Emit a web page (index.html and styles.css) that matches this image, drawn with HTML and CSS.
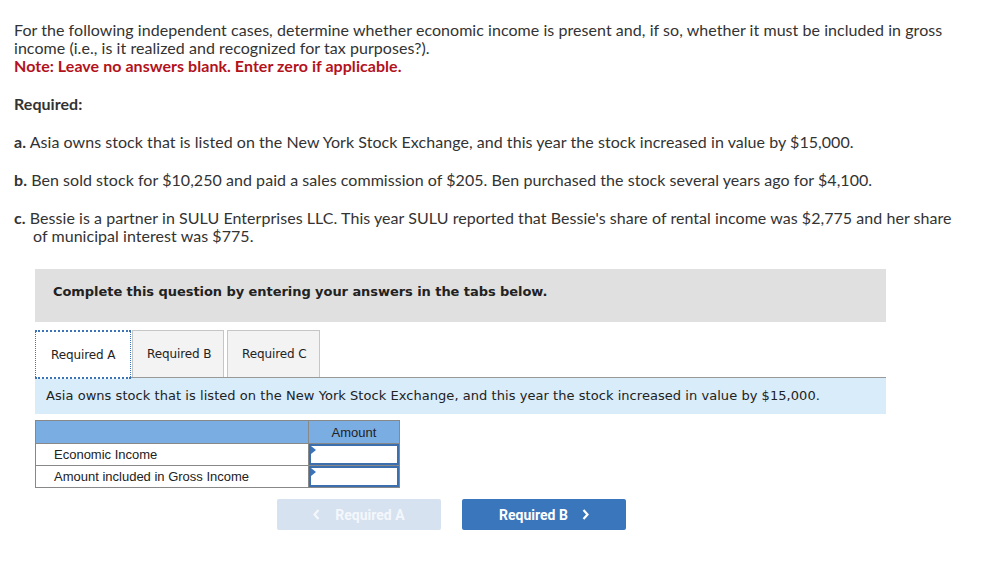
FILE: index.html
```html
<!DOCTYPE html>
<html>
<head>
<meta charset="utf-8">
<link rel="stylesheet" href="styles.css">
</head>
<body>
<div class="page">
  <p class="intro">For the following independent cases, determine whether economic income is present and, if so, whether it must be included in gross income (i.e., is it realized and recognized for tax purposes?).<br><span class="note">Note: Leave no answers blank. Enter zero if applicable.</span></p>
  <p class="req">Required:</p>
  <p class="item"><b>a.</b> Asia owns stock that is listed on the New York Stock Exchange, and this year the stock increased in value by $15,000.</p>
  <p class="item"><b>b.</b> Ben sold stock for $10,250 and paid a sales commission of $205. Ben purchased the stock several years ago for $4,100.</p>
  <p class="item hang"><b>c.</b> Bessie is a partner in SULU Enterprises LLC. This year SULU reported that Bessie's share of rental income was $2,775 and her share of municipal interest was $775.</p>

  <div class="panel">
    <div class="banner">Complete this question by entering your answers in the tabs below.</div>
    <div class="tabs">
      <div class="tab active">Required A</div>
      <div class="tab">Required B</div>
      <div class="tab">Required C</div>
    </div>
    <div class="info">Asia owns stock that is listed on the New York Stock Exchange, and this year the stock increased in value by $15,000.</div>
    <table class="grid">
      <tr class="head"><th class="lbl"></th><th class="amt">Amount</th></tr>
      <tr><td class="lbl">Economic Income</td><td class="inp"><div class="box"><span class="tri"></span></div></td></tr>
      <tr><td class="lbl">Amount included in Gross Income</td><td class="inp"><div class="box"><span class="tri"></span></div></td></tr>
    </table>
    <div class="nav">
      <div class="btn prev"><svg class="chev" width="7" height="11" viewBox="0 0 7 11"><path d="M5.5 1 L1.5 5.5 L5.5 10" fill="none" stroke="currentColor" stroke-width="2.2"/></svg>Required A</div>
      <div class="btn next">Required B<svg class="chev r" width="7" height="11" viewBox="0 0 7 11"><path d="M1.5 1 L5.5 5.5 L1.5 10" fill="none" stroke="currentColor" stroke-width="2.2"/></svg></div>
    </div>
  </div>
</div>
</body>
</html>
```
FILE: styles.css
```css
html, body { margin: 0; padding: 0; background: #fff; }
.page { padding: 21px 14px 0 14px; font-family: "Lato", "Liberation Sans", sans-serif; font-size: 16px; letter-spacing: 0.05px; color: #333; }
p { margin: 0; }
.intro { line-height: 18px; width: 940px; }
.note { color: #b3121c; font-weight: bold; }
.req { font-weight: bold; margin-top: 20px; line-height: 18px; }
.item { margin-top: 20px; line-height: 18px; }
.item b { font-weight: bold; }
.hang { padding-left: 19px; text-indent: -19px; }
.panel { margin: 24px 0 0 21px; width: 851px; letter-spacing: 0; }
.banner { background: #e0e0e0; height: 53px; box-sizing: border-box; padding: 15px 18px; font-family: "DejaVu Sans", Verdana, sans-serif; font-weight: bold; font-size: 13px; color: #222; letter-spacing: -0.06px; }
.tabs { display: flex; margin-top: 8px; border-bottom: 1px solid #999; height: 47px; }
.tab { box-sizing: border-box; height: 47px; padding: 0 0 0 14px; white-space: nowrap; display: flex; align-items: center; font-family: "DejaVu Sans", Verdana, sans-serif; font-size: 12px; color: #222; background: #f3f3f3; border: 1px solid #c6c6c6; border-bottom: none; margin-right: 3px; letter-spacing: -0.1px; }
.tab.active { background: #fff; border: 1px dotted #3b73b9; border-width: 2px 1px; height: 49px; margin-bottom: -2px; width: 96px; margin-right: 1px; padding: 0 0 0 15px; }
.tab:nth-child(2) { width: 92px; }
.tab:nth-child(3) { width: 93px; }
.info { background: #d9ecfa; height: 36px; box-sizing: border-box; padding: 10px 11px; font-family: "DejaVu Sans", Verdana, sans-serif; font-size: 13px; color: #222; letter-spacing: 0.05px; white-space: nowrap; }
.grid { border-collapse: collapse; margin-top: 6px; font-family: "Liberation Sans", Arial, sans-serif; font-size: 13px; color: #222; }
.grid th, .grid td { border: 1px solid #888; padding: 0; }
.head th { background: #7aade2; height: 22px; font-weight: normal; }
.lbl { width: 254px; text-align: left; padding-left: 18px !important; height: 21px; }
.amt { width: 90px; text-align: center; }
.inp { width: 90px; }
.box { position: relative; border: 2px solid #3b6fae; background: #fff; box-sizing: border-box; height: 21px; }
.tri { position: absolute; left: 0; top: 0; width: 0; height: 0; border-top: 4px solid transparent; border-bottom: 4px solid transparent; border-left: 5px solid #3b73b9; }
.nav { display: flex; gap: 21px; margin: 11px 0 0 242px; }
.btn { width: 164px; height: 31px; border-radius: 2px; display: flex; align-items: center; justify-content: center; font-family: "Roboto", "Liberation Sans", sans-serif; font-weight: bold; font-size: 14px; color: #fff; }
.prev { background: #d6e2f0; color: #f4f7fb; }
.next { background: #3a76bb; }
.chev { margin-right: 15px; }
.chev.r { margin-right: 0; margin-left: 14px; }
```
